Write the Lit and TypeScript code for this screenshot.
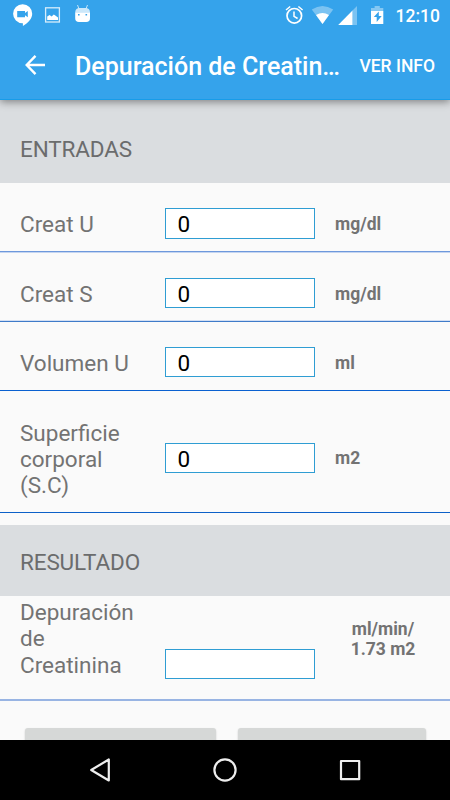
import { LitElement, html, css, svg } from "lit";
import { customElement } from "lit/decorators.js";

interface Row {
  kind: string;
  label: string[];
  value: string;
  unit: string[];
}

const ENTRIES: Row[] = [
  { kind: "r1", label: ["Creat U"], value: "0", unit: ["mg/dl"] },
  { kind: "r2", label: ["Creat S"], value: "0", unit: ["mg/dl"] },
  { kind: "r3", label: ["Volumen U"], value: "0", unit: ["ml"] },
  { kind: "r4", label: ["Superficie", "corporal", "(S.C)"], value: "0", unit: ["m2"] },
];

const RESULT: Row = {
  kind: "r5",
  label: ["Depuración", "de", "Creatinina"],
  value: "",
  unit: ["ml/min/", "1.73 m2"],
};

const statusLeft = svg`
  <path fill="#fff" fill-rule="evenodd" d="M22.6 4.2a9.5 9.5 0 0 1 9.6 9.6c0 5-4 9.200-9.300 12.200v-2.800h-.3a9.500 9.500 0 0 1 0-19zM17.200 11v6.200h7.800v-2l2.800 2V11l-2.800 2v-2z"/>
  <rect x="45.600" y="7.800" width="13.800" height="14.200" fill="none" stroke="#fff" stroke-opacity=".8" stroke-width="1.300"/>
  <path fill="#fff" d="M47.200 20v-3.600l2.400-1.400 2 1.500 2.200-2 1.500 1 2.700 2V20z"/>
  <path fill="#fff" fill-rule="evenodd" d="M75.200 12.200h14.800v6q0 3.800-3.800 3.800h-7.200q-3.800 0-3.800-3.800zM78 14v1.600h1.600V14zM85.500 14v1.600h1.600V14z"/>
  <path fill="#fff" fill-opacity=".75" d="M75.200 12.200q.3-4.200 4.600-4.200h5.600q4.300 0 4.600 4.200z"/>
  <path stroke="#fff" stroke-opacity=".7" stroke-width="1" d="M77.500 5l1.400 3.600M87.500 5l-1.400 3.600"/>`;

const statusRight = svg`
  <circle cx="294.300" cy="15.800" r="7.300" fill="none" stroke="#fff" stroke-width="1.700"/>
  <path fill="none" stroke="#fff" stroke-width="1.500" d="M294 11.500v4.800l3.600 2.200M286 10l4.200-3.500M302.600 10l-4.200-3.500"/>
  <path fill="#fff" fill-opacity=".35" d="M311.800 9.600Q322.500 2.600 333.200 9.600L322.500 24z"/>
  <path fill="#fff" d="M316 14.900q6.500-3.800 13 0L322.500 24z"/>
  <path fill="#fff" fill-opacity=".35" d="M357 6v19h-4.500V10.500z"/>
  <path fill="#fff" d="M352.500 10.500V25h-14.300z"/>
  <path fill="#fff" fill-opacity=".4" d="M371 11V8h3.600V6h5.200v2h3.500v3z"/>
  <path fill="#fff" fill-rule="evenodd" d="M371 11h12.300v13H371zM378.800 11.500l-5 5.600h2.900v5l5-6.100h-2.900z"/>`;

@customElement("app-root")
export class AppRoot extends LitElement {
  static styles = css`
    :host {
      display: flex;
      flex-direction: column;
      width: 450px;
      height: 800px;
      overflow: hidden;
      background: #fafafa;
      color: #737373;
      font-family: Roboto, sans-serif;
      font-size: 22.5px;
      line-height: 26.3px;
    }
    .top {
      flex: none;
      height: 99px;
      background: #35a3eb;
      border-bottom: 1px solid #189ce8;
      box-shadow: 0 2px 8px rgba(0, 0, 0, 0.42);
      color: #fff;
      z-index: 1;
      font-weight: 500;
    }
    .status {
      display: flex;
      height: 31px;
      position: relative;
    }
    .glyphs {
      position: absolute;
      inset: 0;
    }
    .clock {
      margin-left: auto;
      padding: 6px 10px 0 0;
      font-size: 17.5px;
      line-height: 21px;
    }
    .bar {
      display: flex;
      align-items: center;
      height: 68px;
      padding: 0 15px 0 25px;
    }
    .back {
      flex: none;
      width: 20px;
      height: 20px;
    }
    .title {
      margin-left: 30px;
      padding-top: 4px;
      width: 285px;
      font-size: 25px;
      white-space: nowrap;
    }
    .info {
      padding-top: 2px;
      font-size: 17.5px;
      white-space: nowrap;
    }
    .main {
      flex: 1;
      min-height: 0;
      overflow: hidden;
    }
    .section {
      display: flex;
      align-items: center;
      box-sizing: border-box;
      background: #dadde0;
      padding-left: 20px;
      color: #6b6c6d;
      letter-spacing: -0.13px;
    }
    .inputs {
      height: 83px;
      padding-top: 15px;
    }
    .results {
      height: 71px;
      margin-top: 12px;
      padding-top: 4px;
    }
    .row {
      display: grid;
      grid-template-columns: 145px 150px 1fr;
      box-sizing: border-box;
      padding-left: 20px;
      align-items: center;
    }
    .r1 { height: 70px; padding-top: 14px; border-bottom: 1px solid #c5d5f0; box-shadow: inset 0 -1px #6d98dc; }
    .r2 { height: 69px; padding-top: 12px; border-bottom: 1px solid #3f7bc9; box-shadow: inset 0 -1px #d3dff3; }
    .r3 { height: 69px; padding-top: 13px; border-bottom: 1px solid #0a60d0; }
    .r4 { height: 122px; padding-top: 13px; border-bottom: 1px solid #0c60c8; }
    .r5 { height: 105px; align-items: start; border-bottom: 2px solid #98b4e3; }
    .label span,
    .unit span {
      display: block;
    }
    .r2 .label,
    .r3 .label,
    .r4 .label,
    .r2 .unit,
    .r3 .unit { padding-top: 2px; }
    .field {
      box-sizing: border-box;
      height: 31px;
      padding-left: 11.5px;
      border: 1px solid #2f9dd3;
      background: #fff;
      color: #000;
      line-height: 30px;
    }
    .r2 .field,
    .r3 .field,
    .r4 .field { height: 30px; }
    .r1 .field,
    .r3 .field { margin-bottom: 2px; }
    .unit {
      padding-left: 20px;
      font-size: 17.5px;
      line-height: 20.5px;
      font-weight: 700;
    }
    .r4 .unit { padding-top: 1px; }
    .r5 .label { padding-top: 3px; }
    .r5 .field { margin-top: 53px; height: 30px; }
    .r5 .unit {
      width: 96px;
      text-align: center;
      padding-top: 22.5px;
    }
    .actions {
      display: flex;
      gap: 22px;
      padding: 27px 24px 0 25px;
    }
    .action {
      height: 50px;
      width: 191px;
      border-radius: 3px;
      background: #d6d8d7;
      box-shadow: 0 1px 2px rgba(0, 0, 0, 0.2);
    }
    .action.second { width: 188px; }
    .nav {
      flex: none;
      height: 60px;
      background: #000;
      z-index: 1;
    }
    svg { display: block; }
  `;

  private row(r: Row) {
    return html`<div class="row ${r.kind}">
      <div class="label">${r.label.map((t) => html`<span>${t}</span>`)}</div>
      <div class="field">${r.value}</div>
      <div class="unit">${r.unit.map((t) => html`<span>${t}</span>`)}</div>
    </div>`;
  }

  render() {
    return html`
      <div class="top">
        <div class="status">
          <svg class="glyphs" width="450" height="31" viewBox="0 0 450 31">${statusLeft}${statusRight}</svg>
          <div class="clock">12:10</div>
        </div>
        <div class="bar">
          <svg class="back" viewBox="0 0 20 20">
            <path d="M10.500 0.900L1.700 10l8.800 9.100M1.900 10H20" fill="none" stroke="#fff" stroke-width="2.400" />
          </svg>
          <div class="title">Depuración de Creatin…</div>
          <div class="info">VER INFO</div>
        </div>
      </div>
      <div class="main">
        <div class="section inputs">ENTRADAS</div>
        ${ENTRIES.map((r) => this.row(r))}
        <div class="section results">RESULTADO</div>
        ${this.row(RESULT)}
        <div class="actions">
          <div class="action"></div>
          <div class="action second"></div>
        </div>
      </div>
      <div class="nav">
        <svg width="450" height="60" viewBox="0 0 450 60" fill="none" stroke="#eee" stroke-width="2.200" stroke-linejoin="round">
          <path d="M108.800 19.500v21L91.200 30z" />
          <circle cx="225" cy="30" r="10.600" />
          <rect x="341" y="21" width="18.200" height="18.200" />
        </svg>
      </div>
    `;
  }
}
